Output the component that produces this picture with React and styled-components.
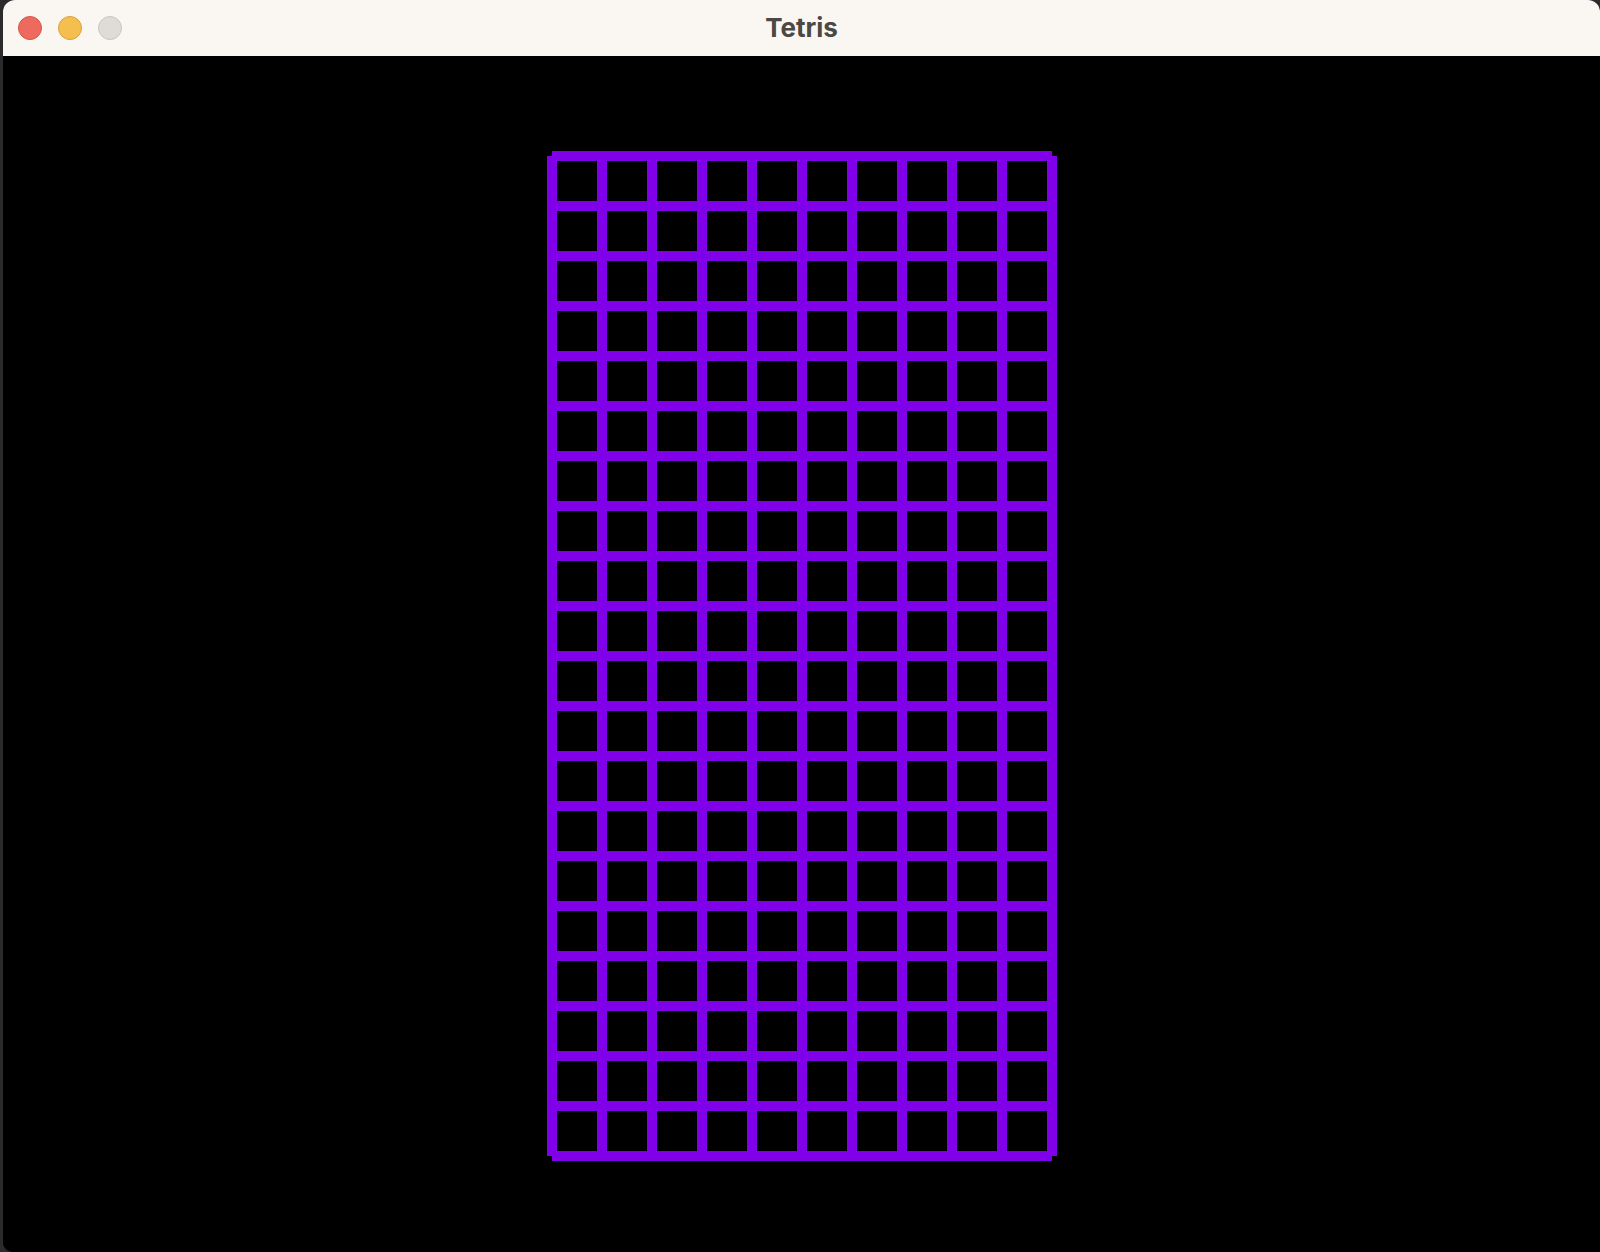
import React from 'react';
import styled, { createGlobalStyle } from 'styled-components';

const GlobalStyle = createGlobalStyle`
  html, body {
    margin: 0;
    padding: 0;
    background: #2b2b2b;
  }
  #root {
    height: 100vh;
  }
`;

const Window = styled.div`
  display: flex;
  flex-direction: column;
  height: 100vh;
  margin-left: 3px;
  border-radius: 12px 12px 0 10px;
  overflow: hidden;
  background: #000;
`;

const TitleBar = styled.div`
  position: relative;
  display: flex;
  align-items: center;
  height: 56px;
  padding-left: 15px;
  background: #faf6f1;
  flex-shrink: 0;
`;

const Lights = styled.div`
  display: flex;
  gap: 16px;
`;

const Light = styled.span`
  width: 24px;
  height: 24px;
  border-radius: 50%;
  box-sizing: border-box;
  background: ${(p) => p.color};
  border: 1px solid ${(p) => p.edge};
`;

const Title = styled.div`
  position: absolute;
  left: 0;
  right: 0;
  top: 0;
  bottom: 2px;
  display: flex;
  align-items: center;
  justify-content: center;
  font-family: Inter, "Liberation Sans", sans-serif;
  font-weight: 700;
  font-size: 26px;
  color: #4b4845;
  pointer-events: none;
`;

const Screen = styled.div`
  flex: 1;
  display: flex;
  align-items: flex-start;
  padding-left: 544px;
  padding-top: 95px;
  background: #000;
`;

const COLS = 10;
const ROWS = 20;
const CELL = 50;
const LINE = '#8000ea';

const Board = () => {
    const w = COLS * CELL;
    const h = ROWS * CELL;
    const lines = [];
    for (let r = 0; r <= ROWS; r++) {
        lines.push(<line key={'h' + r} x1={5} y1={5 + r * CELL} x2={5 + w} y2={5 + r * CELL} />);
    }
    for (let c = 0; c <= COLS; c++) {
        lines.push(<line key={'v' + c} x1={5 + c * CELL} y1={5} x2={5 + c * CELL} y2={5 + h} />);
    }
    return (
        <svg width={w + 10} height={h + 10} viewBox={`0 0 ${w + 10} ${h + 10}`}>
            <g stroke={LINE} strokeWidth="10" strokeLinecap="butt" shapeRendering="crispEdges">
                {lines}
            </g>
        </svg>
    );
};

const App = () => {
    return (
        <>
            <GlobalStyle />
            <Window>
                <TitleBar>
                    <Lights>
                        <Light color="#ee6a5f" edge="#d65549" />
                        <Light color="#f5bf4f" edge="#d9a13b" />
                        <Light color="#dedbd8" edge="#c9c5c1" />
                    </Lights>
                    <Title>Tetris</Title>
                </TitleBar>
                <Screen>
                    <Board />
                </Screen>
            </Window>
        </>
    );
};

export default App;
